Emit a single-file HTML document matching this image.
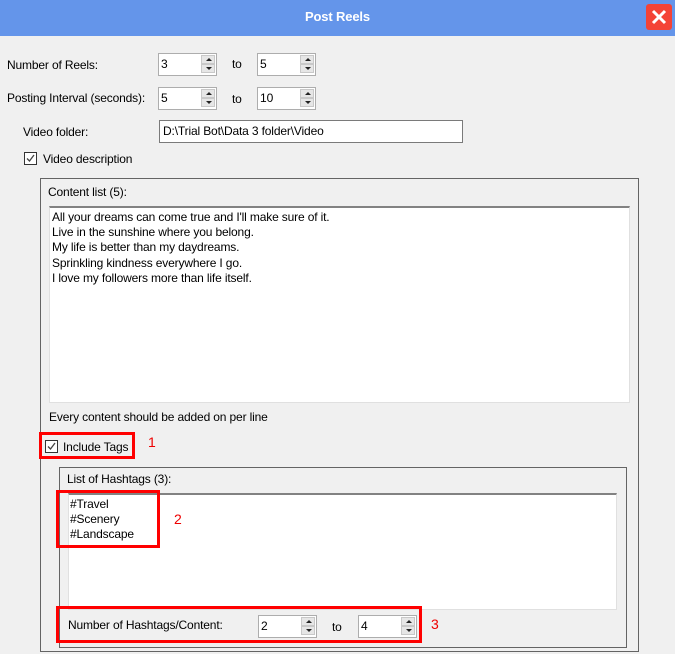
<!DOCTYPE html>
<html><head><meta charset="utf-8"><style>
body{margin:0;width:675px;height:654px;background:#f0f0f0;font-family:"Liberation Sans",sans-serif;font-size:12px;color:#000;position:relative;overflow:hidden}
.a{position:absolute}
.t{position:absolute;white-space:nowrap;line-height:14px;letter-spacing:-0.15px}
.spin{position:absolute;width:57px;height:21px;border:1px solid #adadad;background:#fff}
.spin span{position:absolute;left:2px;top:3px}
.spin .b{position:absolute;right:1px;width:14px;height:9px;background:#e6e6e6;border:1px solid #c8c8c8;box-sizing:border-box}
.spin .u{top:1px}.spin .d{top:10px}
.b:after{content:"";position:absolute;left:4px;border-left:3px solid transparent;border-right:3px solid transparent}
.u:after{top:2px;border-bottom:3px solid #222}
.d:after{top:2px;border-top:3px solid #222}
.chk{position:absolute;width:11px;height:11px;border:1px solid #333;background:#fff}
.red{position:absolute;border:3px solid #f00;box-sizing:border-box}
.rn{position:absolute;color:#e00;font-size:14px}
</style></head><body>
<div class="a" style="left:0;top:0;width:675px;height:36px;background:#6495ea"></div>
<div class="t" style="left:0;width:675px;text-align:center;top:10px;color:#fff;font-weight:bold;font-size:13px">Post Reels</div>
<div class="a" style="left:646px;top:4px;width:26px;height:26px;background:#f44336;border-radius:3px"><svg width="26" height="26"><path d="M7 7L19 19M19 7L7 19" stroke="#fff" stroke-width="3"/></svg></div>

<div class="t" style="left:7px;top:58px">Number of Reels:</div>
<div class="spin" style="left:158px;top:53px"><span>3</span><div class="b u"></div><div class="b d"></div></div>
<div class="t" style="left:232px;top:57px">to</div>
<div class="spin" style="left:257px;top:53px"><span>5</span><div class="b u"></div><div class="b d"></div></div>

<div class="t" style="left:7px;top:91px">Posting Interval (seconds):</div>
<div class="spin" style="left:158px;top:87px"><span>5</span><div class="b u"></div><div class="b d"></div></div>
<div class="t" style="left:232px;top:92px">to</div>
<div class="spin" style="left:257px;top:87px"><span>10</span><div class="b u"></div><div class="b d"></div></div>

<div class="t" style="left:23px;top:125px">Video folder:</div>
<div class="a" style="left:159px;top:120px;width:302px;height:21px;border:1px solid #7a7a7a;background:#fff"><span class="t" style="left:3px;top:3px">D:\Trial Bot\Data 3 folder\Video</span></div>

<div class="chk" style="left:24px;top:152px"><svg width="11" height="11" class="a"><path d="M2 5.5L4.5 8L9 2" stroke="#444" stroke-width="1.3" fill="none"/></svg></div>
<div class="t" style="left:43px;top:152px">Video description</div>

<div class="a" style="left:40px;top:178px;width:597px;height:472px;border:1px solid #646464"></div>
<div class="t" style="left:48px;top:185px">Content list (5):</div>
<div class="a" style="left:49px;top:206px;width:579px;height:194px;background:#fff;border:1px solid #e0e0e0;border-top:2px solid #828282"></div>
<div class="t" style="left:52px;top:210px;line-height:15.2px">All your dreams can come true and I'll make sure of it.<br>Live in the sunshine where you belong.<br>My life is better than my daydreams.<br>Sprinkling kindness everywhere I go.<br>I love my followers more than life itself.</div>
<div class="t" style="left:49px;top:410px">Every content should be added on per line</div>

<div class="chk" style="left:45px;top:440px"><svg width="11" height="11" class="a"><path d="M2 5.5L4.5 8L9 2" stroke="#444" stroke-width="1.3" fill="none"/></svg></div>
<div class="t" style="left:63px;top:440px">Include Tags</div>
<div class="red" style="left:39px;top:432px;width:96px;height:27px"></div>
<div class="rn" style="left:148px;top:434px">1</div>

<div class="a" style="left:59px;top:467px;width:566px;height:179px;border:1px solid #646464"></div>
<div class="t" style="left:67px;top:472px">List of Hashtags (3):</div>
<div class="a" style="left:68px;top:493px;width:547px;height:114px;background:#fff;border:1px solid #e0e0e0;border-top:2px solid #828282"></div>
<div class="t" style="left:70px;top:497px;line-height:15px">#Travel<br>#Scenery<br>#Landscape</div>
<div class="red" style="left:56px;top:490px;width:104px;height:58px"></div>
<div class="rn" style="left:174px;top:511px">2</div>

<div class="t" style="left:68px;top:618px">Number of Hashtags/Content:</div>
<div class="spin" style="left:258px;top:615px"><span>2</span><div class="b u"></div><div class="b d"></div></div>
<div class="t" style="left:332px;top:620px">to</div>
<div class="spin" style="left:358px;top:615px"><span>4</span><div class="b u"></div><div class="b d"></div></div>
<div class="red" style="left:56px;top:606px;width:366px;height:37px"></div>
<div class="rn" style="left:431px;top:616px">3</div>
</body></html>
